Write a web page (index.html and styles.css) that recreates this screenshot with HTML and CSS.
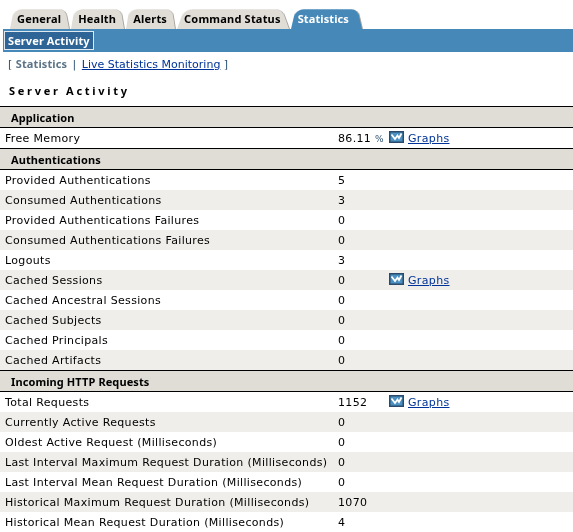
FILE: index.html
```html
<!DOCTYPE html>
<html lang="en">
<head>
    <meta charset="UTF-8">
    <title>Server Activity</title>
    <link rel="stylesheet" href="styles.css">
</head>
<body>
    <svg width="0" height="0" class="defs">
        <symbol id="graph-icon" viewBox="0 0 15 12">
            <rect width="15" height="12" fill="#2b4a6b"/>
            <rect x="1.5" y="1.5" width="12" height="9" fill="#4a90c2"/>
            <path d="M2.5 3.5 L6 8 L8.5 4.5 L10 7 L12.5 2.5" fill="none" stroke="#fff" stroke-width="1.7"/>
        </symbol>
    </svg>
    <nav class="tabs">
        <a href="#" class="tab">General</a>
        <a href="#" class="tab">Health</a>
        <a href="#" class="tab">Alerts</a>
        <a href="#" class="tab">Command Status</a>
        <a href="#" class="tab tab-active">Statistics</a>
    </nav>
    <div class="subnav">
        <a href="#" class="subnav-item">Server Activity</a>
    </div>
    <div class="crumbs">
        [ <b>Statistics</b> <span class="sep">|</span> <a href="#">Live Statistics Monitoring</a> ]
    </div>
    <h1>Server Activity</h1>
    <table class="stats">
        <colgroup><col class="c-label"><col class="c-value"><col></colgroup>
        <tr class="section"><th colspan="3">Application</th></tr>
        <tr><td>Free Memory</td><td>86.11 <span class="unit">%</span></td><td><svg class="icon"><use href="#graph-icon"/></svg><a href="#">Graphs</a></td></tr>
        <tr class="section"><th colspan="3">Authentications</th></tr>
        <tr><td>Provided Authentications</td><td>5</td><td></td></tr>
        <tr class="alt"><td>Consumed Authentications</td><td>3</td><td></td></tr>
        <tr><td>Provided Authentications Failures</td><td>0</td><td></td></tr>
        <tr class="alt"><td>Consumed Authentications Failures</td><td>0</td><td></td></tr>
        <tr><td>Logouts</td><td>3</td><td></td></tr>
        <tr class="alt"><td>Cached Sessions</td><td>0</td><td><svg class="icon"><use href="#graph-icon"/></svg><a href="#">Graphs</a></td></tr>
        <tr><td>Cached Ancestral Sessions</td><td>0</td><td></td></tr>
        <tr class="alt"><td>Cached Subjects</td><td>0</td><td></td></tr>
        <tr><td>Cached Principals</td><td>0</td><td></td></tr>
        <tr class="alt"><td>Cached Artifacts</td><td>0</td><td></td></tr>
        <tr class="section"><th colspan="3">Incoming HTTP Requests</th></tr>
        <tr><td>Total Requests</td><td>1152</td><td><svg class="icon"><use href="#graph-icon"/></svg><a href="#">Graphs</a></td></tr>
        <tr class="alt"><td>Currently Active Requests</td><td>0</td><td></td></tr>
        <tr><td>Oldest Active Request (Milliseconds)</td><td>0</td><td></td></tr>
        <tr class="alt"><td>Last Interval Maximum Request Duration (Milliseconds)</td><td>0</td><td></td></tr>
        <tr><td>Last Interval Mean Request Duration (Milliseconds)</td><td>0</td><td></td></tr>
        <tr class="alt"><td>Historical Maximum Request Duration (Milliseconds)</td><td>1070</td><td></td></tr>
        <tr><td>Historical Mean Request Duration (Milliseconds)</td><td>4</td><td></td></tr>
    </table>
</body>
</html>
```

FILE: styles.css
```css
body {
    margin: 0;
    height: 532px;
    overflow: hidden;
    background-color: #fff;
    color: #000;
    font-family: "DejaVu Sans", Verdana, sans-serif;
    font-size: 11px;
    letter-spacing: 0.34px;
}
a {
    color: #003399;
}
b, th, h1, .tab, .subnav-item {
    font-family: "Noto Sans", "DejaVu Sans", sans-serif;
    font-size: 11px;
    font-weight: bold;
    letter-spacing: 0.1px;
}
.defs {
    position: absolute;
}
.tabs {
    display: flex;
    padding: 9px 0 0 10px;
    height: 20px;
}
.tab {
    display: block;
    position: relative;
    height: 20px;
    line-height: 20px;
    padding: 0 9px 0 7px;
    margin-right: 1px;
    color: #000;
    letter-spacing: 0.2px;
    text-decoration: none;
    white-space: nowrap;
}
/* slanted tab body, text stays upright */
.tab::before {
    content: "";
    position: absolute;
    z-index: -1;
    top: -3px;
    bottom: 0;
    left: 0;
    right: 0;
    background-color: #e0ddd6;
    border-right: 1px solid #a9a69f;
    border-radius: 9px 8px 0 0;
    transform: perspective(30px) rotateX(11deg);
    transform-origin: bottom;
}
.tab-active {
    color: #fff;
    padding: 0 14px 0 7px;
    letter-spacing: 0.1px;
}
.tab-active::before {
    background-color: #4689b8;
}
.subnav {
    margin-left: 3px;
    height: 23px;
    background-color: #4689b8;
    display: flex;
    align-items: center;
    padding-left: 1px;
}
.subnav-item {
    display: block;
    height: 17px;
    line-height: 17px;
    padding: 0 3px;
    border: 1px solid #dfe9f2;
    background-color: #2f6496;
    color: #fff;
    text-decoration: none;
}
.crumbs {
    padding: 4px 0 0 8px;
    height: 16px;
    line-height: 16px;
    color: #2f5578;
    letter-spacing: 0;
}
.crumbs b {
    color: #5d7488;
}
.sep {
    margin: 0 2px;
}
h1 {
    margin: 0;
    padding: 10px 0 0 9px;
    height: 19px;
    line-height: 18px;
    letter-spacing: 2.7px;
}
.stats {
    width: 573px;
    margin-top: 5px;
    table-layout: fixed;
    border-collapse: collapse;
}
.c-label {
    width: 338px;
}
.c-value {
    width: 51px;
}
.stats td {
    height: 20px;
    padding: 0;
    white-space: nowrap;
}
.stats td:first-child {
    padding-left: 5px;
}
.stats th {
    height: 20px;
    padding: 0 0 0 11px;
    text-align: left;
    background-color: #e0ddd6;
    border-top: 1px solid #000;
    border-bottom: 1px solid #000;
}
.alt td {
    background-color: #efeeea;
}
.unit {
    color: #2f5578;
    font-size: 9px;
}
.icon {
    width: 15px;
    height: 12px;
    margin-right: 4px;
    vertical-align: -1px;
}
```
